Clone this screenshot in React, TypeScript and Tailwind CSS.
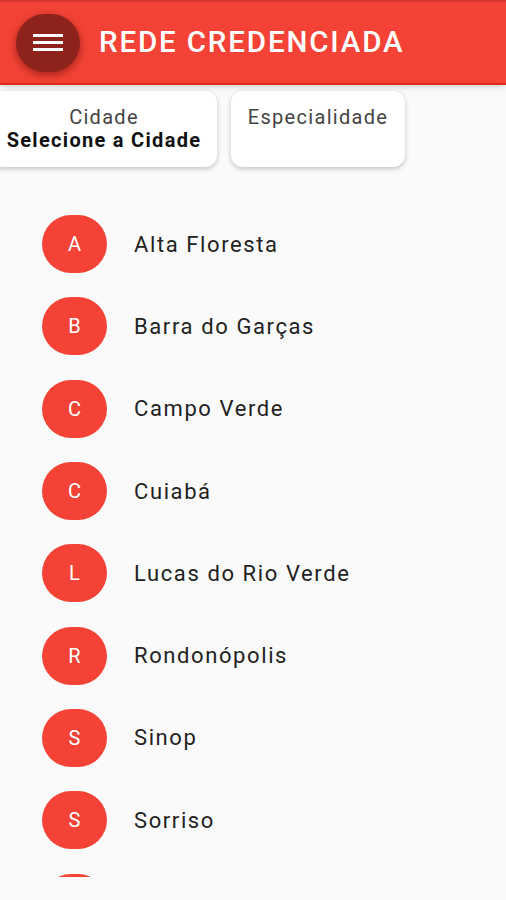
const cities = [
  "Alta Floresta",
  "Barra do Garças",
  "Campo Verde",
  "Cuiabá",
  "Lucas do Rio Verde",
  "Rondonópolis",
  "Sinop",
  "Sorriso",
];

export default function App() {
  return (
    <div
      className="w-[506px] h-[900px] overflow-hidden bg-[#fafafa]"
      style={{ fontFamily: "Roboto, 'Liberation Sans', sans-serif" }}
    >
      {/* app bar */}
      <div className="h-[85px] bg-[#f44336] border-t-2 border-b-2 border-t-[#d6362b] border-b-[#e0281c] flex items-center shadow-md">
        <button
          type="button"
          className="ml-4 w-[64px] h-[58px] rounded-full bg-[#8e231c] shadow-[0_3px_8px_rgba(90,0,0,0.5)] flex flex-col items-center justify-center gap-[4px]"
        >
          <span className="block w-[30px] h-[3px] bg-white" />
          <span className="block w-[30px] h-[3px] bg-white" />
          <span className="block w-[30px] h-[3px] bg-white" />
        </button>
        <h1 className="ml-[19px] text-white text-[29.5px] font-medium tracking-[1.85px]">
          REDE CREDENCIADA
        </h1>
      </div>

      {/* filters */}
      <div className="flex gap-[14px] -ml-[9px] mt-[6px]">
        <div className="w-[226px] h-[76px] bg-white rounded-xl shadow-[0_2px_5px_rgba(0,0,0,0.22)] flex flex-col items-center pt-[15px] leading-[23px] tracking-[1.3px]">
          <span className="text-[20px] text-[#444]">Cidade</span>
          <span className="text-[20px] font-bold text-[#111]">Selecione a Cidade</span>
        </div>
        <div className="w-[174px] h-[76px] bg-white rounded-xl shadow-[0_2px_5px_rgba(0,0,0,0.22)] flex flex-col items-center pt-[15px] leading-[23px] tracking-[1.3px]">
          <span className="text-[20px] text-[#444]">Especialidade</span>
        </div>
      </div>

      {/* list, clipped at the bottom of the scroll view */}
      <div className="mt-[36px] h-[674px] overflow-hidden">
        <ul>
          {cities.map((c) => (
            <li key={c} className="h-[82.3px] flex items-center">
              <div className="ml-[42px] w-[65px] h-[58px] rounded-full bg-[#f44336] flex items-center justify-center text-white text-[20px]">
                {c.charAt(0)}
              </div>
              <span className="ml-[27px] text-[22px] text-[#222] tracking-[1.6px]">{c}</span>
            </li>
          ))}
          {/* next row, scrolled out of view */}
          <li className="h-[82.3px] flex items-center">
            <div className="ml-[42px] w-[65px] h-[58px] rounded-full bg-[#f44336]" />
          </li>
        </ul>
      </div>
    </div>
  );
}
